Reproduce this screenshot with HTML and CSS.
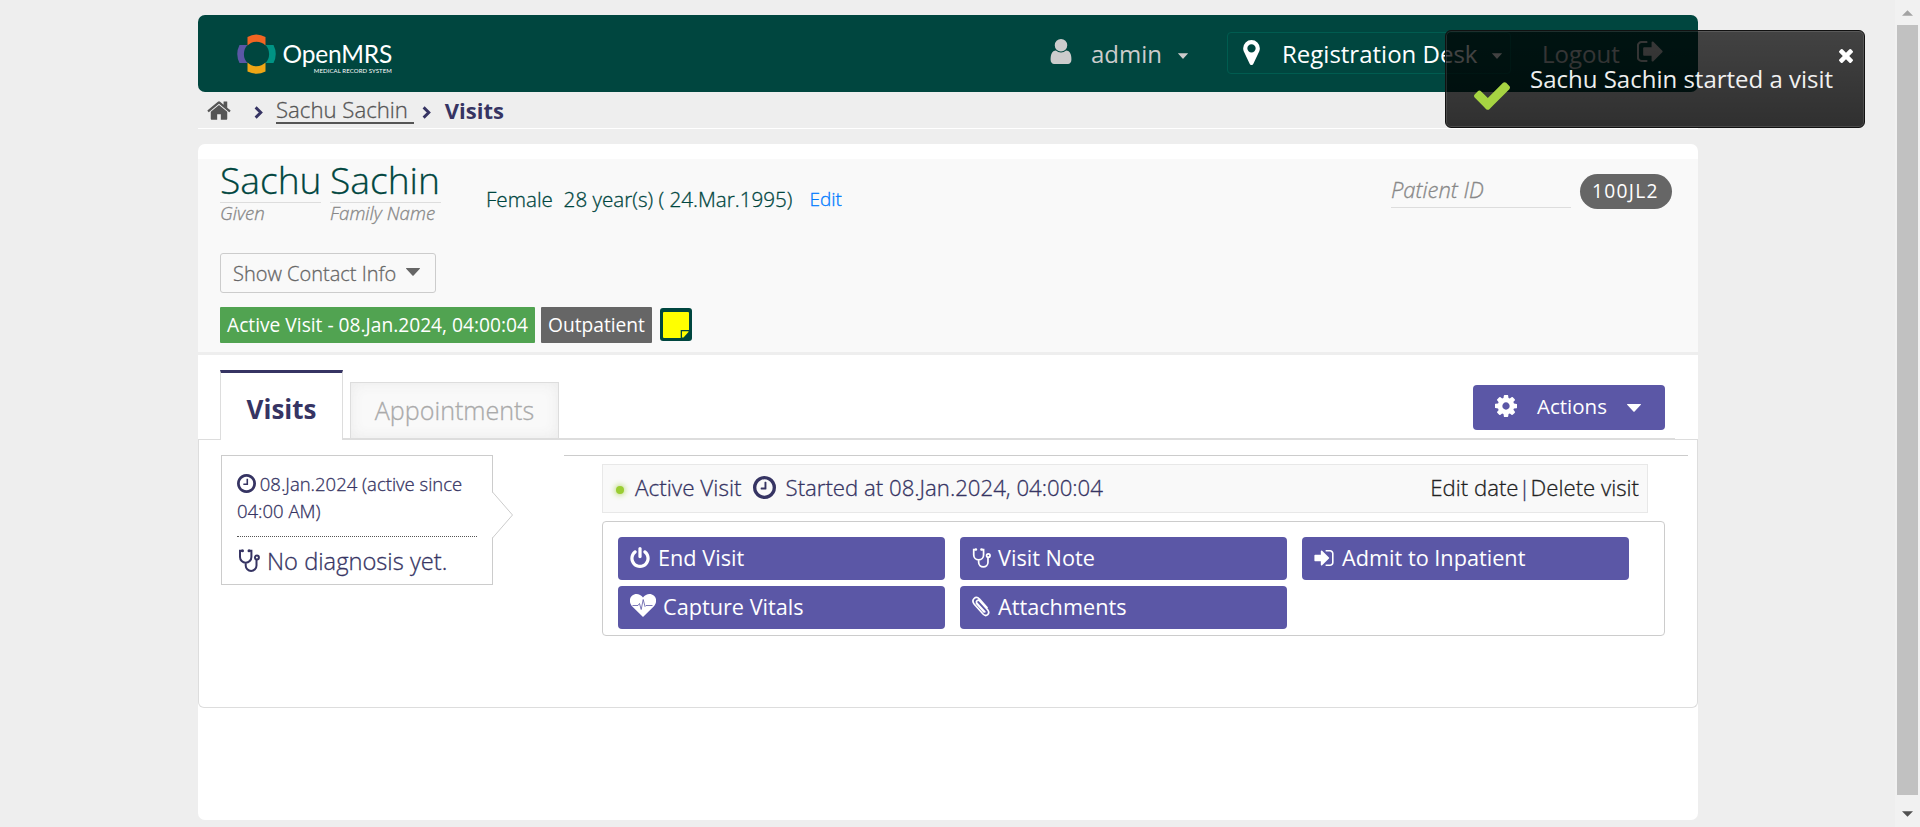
FILE: index.html
```html
<!DOCTYPE html>
<html lang="en">
<head>
<meta charset="utf-8">
<title>OpenMRS</title>
<link rel="stylesheet" href="styles.css">
</head>
<body>
<svg class="defs" aria-hidden="true">
  <symbol id="home" viewBox="57 248 1678 1288"><path d="M1472 992v480q0 26-19 45t-45 19h-384v-384h-256v384h-384q-26 0-45-19t-19-45v-480q0-1 .5-3t.5-3l575-474 575 474q1 2 1 6zm223-69l-62 74q-8 9-21 11h-3q-13 0-21-7l-692-577-692 577q-12 8-24 7-13-2-21-11l-62-74q-8-10-7-23.5t11-21.5l719-599q32-26 76-26t76 26l244 204v-195q0-14 9-23t23-9h192q14 0 23 9t9 23v408l219 182q10 8 11 21.5t-7 23.5z"/></symbol>
  <symbol id="user" viewBox="256 128 1280 1536"><path d="M1536 1399q0 109-62.5 187t-150.5 78h-854q-88 0-150.5-78t-62.5-187q0-85 8.5-160.5t31.5-152 58.5-131 94-89 134.5-34.5q131 128 313 128t313-128q76 0 134.5 34.5t94 89 58.5 131 31.5 152 8.5 160.5zm-256-887q0 159-112.5 271.5t-271.5 112.5-271.5-112.5-112.5-271.5 112.5-271.5 271.5-112.5 271.5 112.5 112.5 271.5z"/></symbol>
  <symbol id="marker" viewBox="384 128 1024 1536"><path d="M1152 640q0-106-75-181t-181-75-181 75-75 181 75 181 181 75 181-75 75-181zm256 0q0 109-33 179l-364 774q-16 33-47.5 52t-67.5 19-67.5-19-46.5-52l-365-774q-33-70-33-179 0-212 150-362t362-150 362 150 150 362z"/></symbol>
  <symbol id="signout" viewBox="96 256 1536 1280"><path d="M704 1440q0 4 1 20t.5 26.5-3 23.5-10 19.5-20.5 6.5h-320q-119 0-203.5-84.5t-84.5-203.5v-704q0-119 84.5-203.5t203.5-84.5h320q13 0 22.5 9.5t9.5 22.5q0 4 1 20t.5 26.5-3 23.5-10 19.5-20.5 6.5h-320q-66 0-113 47t-47 113v704q0 66 47 113t113 47h312l11.5 1 11.5 3 8 5.5 7 9 2 13.5zm928-544q0 26-19 45l-544 544q-19 19-45 19t-45-19-19-45v-288h-448q-26 0-45-19t-19-45v-384q0-26 19-45t45-19h448v-288q0-26 19-45t45-19 45 19l544 544q19 19 19 45z"/></symbol>
  <symbol id="signin" viewBox="128 256 1536 1280"><path d="M1312 896q0 26-19 45l-544 544q-19 19-45 19t-45-19-19-45v-288h-448q-26 0-45-19t-19-45v-384q0-26 19-45t45-19h448v-288q0-26 19-45t45-19 45 19l544 544q19 19 19 45zm352-352v704q0 119-84.5 203.5t-203.5 84.5h-320q-13 0-22.5-9.5t-9.5-22.5q0-4-1-20t-.5-26.5 3-23.5 10-19.5 20.5-6.5h320q66 0 113-47t47-113v-704q0-66-47-113t-113-47h-312l-11.5-1-11.5-3-8-5.5-7-9-2-13.5q0-4-1-20t-.5-26.5 3-23.5 10-19.5 20.5-6.5h320q119 0 203.5 84.5t84.5 203.5z"/></symbol>
  <symbol id="power" viewBox="128 0 1536 1664"><path d="M1664 896q0 156-61 298t-164 245-245 164-298 61-298-61-245-164-164-245-61-298q0-182 80.5-343t226.5-270q43-32 95.5-25t83.5 50q32 42 24.5 94.5t-49.5 84.5q-98 74-151.5 181t-53.5 228q0 104 40.5 198.5t109.5 163.5 163.5 109.5 198.5 40.5 198.5-40.5 163.5-109.5 109.5-163.5 40.5-198.5q0-121-53.5-228t-151.5-181q-42-32-49.5-84.5t24.5-94.5q31-43 84-50t95 25q146 109 226.5 270t80.5 343zm-640-768v640q0 52-38 90t-90 38-90-38-38-90v-640q0-52 38-90t90-38 90 38 38 90z"/></symbol>
  <symbol id="clock" viewBox="128 128 1536 1536"><path d="M1024 544v448q0 14-9 23t-23 9h-320q-14 0-23-9t-9-23v-64q0-14 9-23t23-9h224v-352q0-14 9-23t23-9h64q14 0 23 9t9 23zm416 352q0-148-73-273t-198-198-273-73-273 73-198 198-73 273 73 273 198 198 273 73 273-73 198-198 73-273zm224 0q0 209-103 385.5t-279.5 279.5-385.5 103-385.5-103-279.5-279.5-103-385.5 103-385.5 279.5-279.5 385.5-103 385.5 103 279.5 279.5 103 385.5z"/></symbol>
  <symbol id="cog" viewBox="128 128 1536 1536"><path d="M1152 896q0-106-75-181t-181-75-181 75-75 181 75 181 181 75 181-75 75-181zm512-109v222q0 12-8 23t-20 13l-185 28q-19 54-39 91 35 50 107 138 10 12 10 25t-9 23q-27 37-99 108t-94 71q-12 0-26-9l-138-108q-44 23-91 38-16 136-29 186-7 28-36 28h-222q-14 0-24.5-8.5t-11.5-21.5l-28-184q-49-16-90-37l-141 107q-10 9-25 9-14 0-25-11-126-114-165-168-7-10-7-23 0-12 8-23 15-21 51-66.5t54-70.5q-27-50-41-99l-183-27q-13-2-21-12.5t-8-23.5v-222q0-12 8-23t19-13l186-28q14-46 39-92-40-57-107-138-10-12-10-24 0-10 9-23 26-36 98.5-107.5t94.5-71.5q13 0 26 10l138 107q44-23 91-38 16-136 29-186 7-28 36-28h222q14 0 24.5 8.5t11.5 21.5l28 184q49 16 90 37l142-107q9-9 24-9 13 0 25 10 129 119 165 170 7 8 7 22 0 12-8 23-15 21-51 66.5t-54 70.5q26 50 41 98l183 28q13 2 21 12.5t8 23.5z"/></symbol>
  <symbol id="check" viewBox="121 334 1550 1188"><path d="M1671 566q0 40-28 68l-724 724-136 136q-28 28-68 28t-68-28l-136-136-362-362q-28-28-28-68t28-68l136-136q28-28 68-28t68 28l294 295 656-657q28-28 68-28t68 28l136 136q28 28 28 68z"/></symbol>
  <symbol id="times" viewBox="302 366 1188 1188"><path d="M1490 1322q0 40-28 68l-136 136q-28 28-68 28t-68-28l-294-294-294 294q-28 28-68 28t-68-28l-136-136q-28-28-28-68t28-68l294-294-294-294q-28-28-28-68t28-68l136-136q28-28 68-28t68 28l294 294 294-294q28-28 68-28t68 28l136 136q28 28 28 68t-28 68l-294 294 294 294q28 28 28 68z"/></symbol>
  <symbol id="caret" viewBox="0 0 14 8"><path d="M0.4 0h13.2q.8.3 0 1L7.6 7.6q-.6.5-1.2 0L.4 1q-.8-.7 0-1z"/></symbol>
  <symbol id="chevron" viewBox="0 0 9 13"><path d="M1.6 1.4l5.2 5.1-5.2 5.1" fill="none" stroke="currentColor" stroke-width="2.9"/></symbol>
  <symbol id="stetho" viewBox="0 0 22 23"><g fill="none" stroke="currentColor" stroke-width="2"><path d="M4.2 1.8H2V8a5.7 5.7 0 0 0 11.400 0V1.800H11.200M7.700 14V16.500a5.400 5.400 0 0 0 10.800 0V11"/><circle cx="18.900" cy="8.600" r="2"/></g><circle cx="4.500" cy="1.700" r="1.500"/><circle cx="11" cy="1.700" r="1.500"/></symbol>
  <symbol id="clip" viewBox="0 0 18 21"><path d="M12.800 15.800L5 7.200C3.400 5.200 6 3 7.700 4.900L15.600 13.800C18.600 17.600 14.300 21.500 11 18L2.300 8.200C-1.300 3.800 3.600-.9 7.500 3L15 11.500M4.500 7.500L11.800 15.800" fill="none" stroke="currentColor" stroke-width="1.700" stroke-linecap="round"/></symbol>
  <symbol id="heart" viewBox="0 0 26 23"><path d="M13 23L2.300 12.500C-1 9-.8 4 2 1.700 5.300-1 10.200-.4 13 3.600 15.800-.4 20.700-1 24 1.700 26.800 4 27 9 23.700 12.500z"/><path d="M2.500 11.500H8L9.500 9.500 11.200 15.500 13.200 5.500 15 12.500 16 11.500H22.500" fill="none" stroke="#5b57a6" stroke-width=".8"/></symbol>
</svg>

<div class="page">
  <header class="topbar">
    <div class="logo">
      <svg class="logo-mark" viewBox="0 0 40 40">
        <path fill="#f26522" d="M10.500 3Q19.500-2 28.500 3V11.500A12.800 12.800 0 0 0 10.500 11.500z"/>
        <path fill="#5b57a6" d="M2.500 11H10.500A13 13 0 0 0 10.500 29H2.500Q-2 20 2.500 11z"/>
        <path fill="#009384" d="M36.500 11H28.500A13 13 0 0 1 28.500 29H36.500Q41 20 36.500 11z"/>
        <path fill="#eea616" d="M10.500 37.500Q19.500 42 28.500 37.500V28.500A12.800 12.800 0 0 1 10.500 28.500z"/>
      </svg>
      <div class="logo-words"><span class="logo-name">OpenMRS</span><span class="logo-sub">MEDICAL RECORD SYSTEM</span></div>
    </div>
    <nav class="usernav">
      <span class="account"><svg class="i-user"><use href="#user"/></svg><span>admin</span><svg class="i-caret"><use href="#caret"/></svg></span>
      <span class="location"><svg class="i-marker"><use href="#marker"/></svg><span>Registration Desk</span><svg class="i-caret"><use href="#caret"/></svg></span>
      <span class="logout"><span>Logout</span><svg class="i-out"><use href="#signout"/></svg></span>
    </nav>
  </header>

  <nav class="crumbs">
    <svg class="i-home"><use href="#home"/></svg>
    <svg class="i-chev first"><use href="#chevron"/></svg>
    <a class="crumb-link">Sachu Sachin&nbsp;</a>
    <svg class="i-chev"><use href="#chevron"/></svg>
    <span class="crumb-here">Visits</span>
  </nav>

  <main class="body">
    <section class="patient">
      <div class="identity">
        <div class="name"><span class="name-text">Sachu</span><em>Given</em></div>
        <div class="name family"><span class="name-text">Sachin</span><em>Family Name</em></div>
        <div class="demo">Female&nbsp; 28 year(s) ( 24.Mar.1995)</div>
        <a class="edit">Edit</a>
        <div class="pid"><em>Patient ID</em><span class="pill">100JL2</span></div>
      </div>
      <div class="contact"><span>Show Contact Info</span><svg class="i-caret-lg"><use href="#caret"/></svg></div>
      <div class="tags">
        <span class="tag green">Active Visit - 08.Jan.2024, 04:00:04</span>
        <span class="tag">Outpatient</span>
        <svg class="sticky" viewBox="0 0 32 33"><rect width="32" height="33" rx="3" fill="#00463f"/><rect x="3" y="4" width="26" height="26" rx="1" fill="#ff0"/><path d="M20.700 30V22H29V30z" fill="#00463f"/><path d="M22 29.500V23.300H28.500V24L23.500 29.500z" fill="#ff0"/></svg>
      </div>
    </section>

    <section class="tabs">
      <div class="tab-gap"></div>
      <div class="tab active">Visits</div>
      <div class="tab-rail">
        <div class="tab idle">Appointments</div>
        <div class="actions"><svg class="i-cog"><use href="#cog"/></svg><span>Actions</span><svg class="i-caret-lg"><use href="#caret"/></svg></div>
      </div>
      <div class="tab-gap end"></div>
    </section>

    <section class="panel">
      <div class="visit-card">
        <div class="visit-date"><svg class="i-clock"><use href="#clock"/></svg> 08.Jan.2024 (active since<br>04:00 AM)</div>
        <div class="visit-dx"><svg class="i-stetho"><use href="#stetho"/></svg><span>No diagnosis yet.</span></div>
        <svg class="pointer" viewBox="0 0 22 46"><path d="M0 0L20.500 23L0 46z" fill="#fff"/><path d="M.5 0L20.500 23L.5 46" fill="none" stroke="#ccc"/></svg>
      </div>
      <div class="detail">
        <div class="status">
          <i class="dot"></i><span class="st-label">Active Visit</span><svg class="i-clock-lg"><use href="#clock"/></svg><span>Started at 08.Jan.2024, 04:00:04</span>
          <span class="links"><a>Edit date</a><b>|</b><a>Delete visit</a></span>
        </div>
        <div class="buttons">
          <a class="btn"><svg class="i-power"><use href="#power"/></svg>End Visit</a>
          <a class="btn"><svg class="i-st"><use href="#stetho"/></svg>Visit Note</a>
          <a class="btn"><svg class="i-in"><use href="#signin"/></svg>Admit to Inpatient</a>
          <a class="btn"><svg class="i-heart"><use href="#heart"/></svg>Capture Vitals</a>
          <a class="btn"><svg class="i-clip"><use href="#clip"/></svg>Attachments</a>
        </div>
      </div>
    </section>
  </main>
</div>

<aside class="toast"><svg class="i-check"><use href="#check"/></svg><p>Sachu Sachin started a visit</p><svg class="i-times"><use href="#times"/></svg></aside>

<div class="scrollbar"><svg class="arrow up" viewBox="0 0 12 6"><path d="M0 6L6 0l6 6z"/></svg><div class="thumb"></div><svg class="arrow down" viewBox="0 0 12 6"><path d="M0 0h12L6 6z"/></svg></div>
</body>
</html>
```
FILE: styles.css
```css
* { box-sizing: border-box; }
html, body { height: 827px; overflow: hidden; }
body { margin: 0; background: #eee; color: #363463; font-family: "Open Sans", "Noto Sans", sans-serif; white-space: nowrap; }
svg { fill: currentColor; flex: none; display: block; }
.defs { position: absolute; width: 0; height: 0; }
.page { width: 1500px; margin-left: 198px; padding-top: 15px; }

/* light text, slightly thickened */
.crumb-link, .name-text, em, .demo, .edit, .contact, .tab.idle, .visit-date, .visit-dx, .status { font-weight: 300; -webkit-text-stroke: 0.3px currentColor; }

.topbar { height: 77px; background: #00463f; border-radius: 7px; display: flex; justify-content: space-between; color: #ccc; font-size: 24px; line-height: 34px; }
.logo { display: flex; margin: 19px 0 0 39px; gap: 8px; height: 40px; }
.logo-mark { width: 40px; height: 40px; }
.logo-words { display: flex; flex-direction: column; align-items: flex-end; color: #fff; width: 107px; padding-top: 6px; }
.logo-name { font: 400 24.500px/28px Lato, sans-serif; letter-spacing: -0.200px; }
.logo-sub { font: 400 6px/7px Lato, sans-serif; letter-spacing: 0.100px; margin-top: -1px; }
.usernav { display: flex; padding-top: 17px; height: 59px; }
.usernav span span { padding-top: 2px; }
.account { display: flex; align-items: center; margin-right: 39px; }
.i-user { width: 24px; height: 25px; margin: -4px 18px 0 0; }
.i-caret { width: 10px; height: 6px; margin: 6px 0 0 16px; }
.location { display: flex; align-items: center; width: 284px; border: 1px solid #005c50; border-radius: 4px; padding-left: 15px; color: #fff; }
.i-marker { width: 17px; height: 25px; margin: -2px 22px 0 0; }
.location .i-caret { margin-left: 15px; }
.logout { display: flex; align-items: center; padding-left: 31px; width: 187px; }
.i-out { width: 26px; height: 21px; margin: -3px 0 0 17px; }

.crumbs { height: 37px; border-bottom: 1px solid #fff; display: flex; align-items: center; font-size: 22px; line-height: 30px; padding-left: 9px; }
.i-home { width: 24px; height: 19px; color: #555; }
.i-chev { width: 9px; height: 13px; margin: 5px 14px 0 8px; }
.i-chev.first { margin-left: 23px; margin-right: 13px; }
.crumb-link { font-size: 22.200px; color: #555; border-bottom: 2px solid #555; line-height: 24px; margin-top: 1px; }
.crumb-here { font-weight: 700; }

.body { margin-top: 15px; height: 676px; background: #fff; border-radius: 7px; padding-top: 15px; }
.patient { height: 196px; background: #f9f9f9; border-bottom: 3px solid #eee; padding: 0 26px 0 22px; }
.identity { display: flex; height: 94px; color: #00463f; }
.name { width: 101px; }
.name.family { width: 111px; margin-left: 9px; }
.name-text { display: block; height: 44px; border-bottom: 1px solid #ddd; font-size: 37.200px; line-height: 42px; }
em { color: #888; }
.name em { display: block; font-size: 18.700px; line-height: 20px; }
.demo { margin: 25px 0 0 45px; font-size: 20.650px; line-height: 30px; }
.edit { margin: 25px 0 0 17px; font-size: 19px; line-height: 31px; color: #007bff; }
.pid { margin-left: auto; display: flex; gap: 9px; padding-top: 15px; }
.pid em { width: 180px; height: 34px; border-bottom: 1px solid #ddd; font-size: 22px; line-height: 31px; }
.pill { width: 92px; height: 35px; border-radius: 18px; background: #666; color: #fff; font-size: 19.200px; line-height: 34px; letter-spacing: 1.300px; padding-left: 12px; }
.contact { width: 216px; height: 40px; border: 1px solid #ccc; border-radius: 3px; padding-left: 12px; display: flex; align-items: center; font-size: 20px; color: #666; }
.i-caret-lg { width: 14px; height: 8px; margin-left: 10px; }
.contact .i-caret-lg { margin-top: -2px; }
.tags { display: flex; gap: 6px; margin-top: 14px; }
.tag { height: 36px; padding: 0 7px; background: #666; color: #fff; font-size: 19.200px; line-height: 36px; border-radius: 1px; }
.tag.green { background: #51a351; }
.sticky { width: 32px; height: 33px; margin: 1px 0 0 2px; }

.tabs { display: flex; height: 85px; padding-top: 15px; }
.tab-gap { width: 22px; border-bottom: 1px solid #ddd; }
.tab-gap.end { flex: 1; }
.tab.active { width: 123px; border: 1px solid #ddd; border-top: 3px solid #363463; border-bottom: 0; font-size: 26px; font-weight: 700; line-height: 72px; text-align: center; }
.tab-rail { width: 1332px; height: 70px; border-bottom: 2px solid #ddd; padding: 12px 10px 0 7px; display: flex; justify-content: space-between; }
.tab.idle { width: 209px; height: 56px; border: 1px solid #ddd; border-bottom: 0; background: #f9f9f9; box-shadow: inset 0 0 14px #eaeaea; color: #aaa; font-size: 25.100px; line-height: 54px; text-align: center; }
.actions { width: 192px; height: 45px; margin-top: 3px; background: #5b57a6; border-radius: 4px; color: #fff; display: flex; align-items: center; padding-left: 22px; font-size: 20.500px; }
.i-cog { width: 22px; height: 22px; margin: -4px 20px 0 0; }
.actions span { line-height: 40px; padding-bottom: 4px; }
.actions .i-caret-lg { margin-left: 20px; margin-top: 1px; }

.panel { height: 268px; border: 1px solid #ddd; border-top: 0; border-radius: 0 0 6px 6px; display: flex; padding: 15px 9px 0 22px; }
.visit-card { position: relative; width: 272px; height: 130px; border: 1px solid #ccc; padding: 14px 15px 0; }
.visit-date { height: 67px; border-bottom: 1px dotted #555; font-size: 18.500px; line-height: 27px; }
.i-clock { display: inline-block; width: 19px; height: 19px; vertical-align: -2px; margin-right: -1px; }
.visit-dx { display: flex; font-size: 23.700px; line-height: 32px; padding-top: 8px; gap: 7px; }
.i-stetho { width: 22px; height: 23px; margin: 4px 0 0 1px; }
.pointer { position: absolute; left: 270px; top: 36px; width: 22px; height: 46px; }
.detail { margin-left: 71px; width: 1124px; border-top: 1px solid #ccc; padding: 8px 0 0 38px; }
.status { width: 1046px; height: 49px; border: 1px solid #e8e8e8; background: #f9f9f9; display: flex; align-items: center; font-size: 22.200px; line-height: 43px; padding: 0 8px 3px 13px; }
.st-label { font-size: 22.500px; }
.dot { width: 8px; height: 8px; border-radius: 50%; background: #9acd32; box-shadow: 0 0 6px #9acd32; margin: 6px 11px 0 0; }
.i-clock-lg { width: 23px; height: 23px; margin: 0 10px 0 11px; }
.links { margin-left: auto; color: #222; }
.links b { font-weight: 300; margin: 0; color: #363463; }
.buttons { margin-top: 8px; width: 1063px; height: 115px; border: 1px solid #ccc; border-radius: 4px; padding: 15px; display: grid; grid-template-columns: repeat(3, 327px); gap: 6px 15px; grid-auto-rows: 43px; }
.btn { background: #5b57a6; color: #fff; border-radius: 4px; font-size: 21.700px; display: flex; align-items: center; padding: 0 0 2px 12px; }
.i-power { width: 20px; height: 21px; margin-right: 8px; }
.i-st { width: 19px; height: 20px; margin-right: 7px; }
.i-in { width: 20px; height: 16px; margin-right: 8px; }
.i-heart { width: 26px; height: 23px; margin: -2px 7px 0 0; }
.i-clip { width: 18px; height: 21px; margin-right: 8px; }

.toast { position: absolute; left: 1445px; top: 30px; width: 420px; height: 98px; border: 1px solid #111; border-radius: 6px; background: linear-gradient(rgba(0,0,0,.72), rgba(0,0,0,.8)); box-shadow: inset 0 0 0 1px rgba(255,255,255,.12); display: flex; color: #fff; }
.i-check { width: 36px; height: 28px; color: #a6d442; margin: 51px 20px 0 28px; }
.toast p { margin: 31px 0 0; font-size: 24px; line-height: 34px; width: 309px; opacity: .93; }
.i-times { width: 14px; height: 14px; margin-top: 18px; }

.scrollbar { position: absolute; right: 0; top: 0; width: 25px; height: 827px; background: #f1f1f1; display: flex; flex-direction: column; align-items: center; padding-top: 10px; }
.arrow { width: 11px; height: 6px; color: #a3a3a3; }
.arrow.down { color: #505050; }
.thumb { width: 21px; height: 770px; background: #c1c1c1; margin: 9px 0 16px; }
```
